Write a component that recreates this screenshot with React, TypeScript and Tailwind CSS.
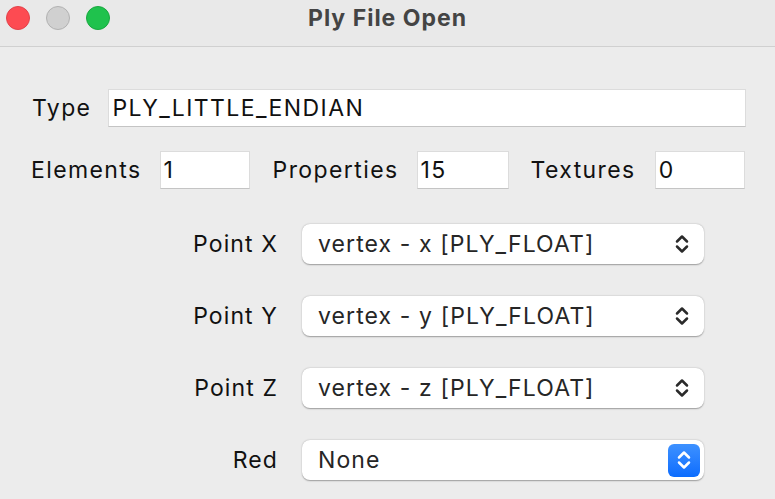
import React from "react";

const font = { fontFamily: "Inter, 'Liberation Sans', sans-serif" };

function Field({ value, className }: { value: string; className: string }) {
    return (
        <div className={"h-[38px] bg-white border border-[#dcdcdc] border-b-[#c4c4c4] flex items-center px-[3px] text-[23px] tracking-[1.4px] text-[#111]" + " " + className}>
            {value}
        </div>
    );
}

function Chevrons({ color }: { color: string }) {
    return (
        <svg width="14" height="20" viewBox="0 0 14 20" fill="none" stroke={color} strokeWidth="2.5" strokeLinecap="round" strokeLinejoin="round">
            <path d="M2 7.5 L7 2.5 L12 7.5" />
            <path d="M2 12.5 L7 17.5 L12 12.5" />
        </svg>
    );
}

function Select({ value, active }: { value: string; active?: boolean }) {
    return (
        <div className="h-[40px] bg-white rounded-[8px] shadow-[0_0.5px_1.5px_rgba(0,0,0,0.35)] flex items-center justify-between pl-[16px] pr-[4px] text-[23px] tracking-[1.1px] text-[#262626]">
            <span>{value}</span>
            {active ? (
                <div className="w-[32px] h-[33px] rounded-[6px] bg-gradient-to-b from-[#3d91ff] to-[#0a6cfe] flex items-center justify-center">
                    <Chevrons color="#ffffff" />
                </div>
            ) : (
                <div className="w-[32px] flex items-center justify-center mr-[2px]">
                    <Chevrons color="#2a2a2a" />
                </div>
            )}
        </div>
    );
}

export default function App() {
    const rows = [
        { label: "Point X", value: "vertex - x [PLY_FLOAT]" },
        { label: "Point Y", value: "vertex - y [PLY_FLOAT]" },
        { label: "Point Z", value: "vertex - z [PLY_FLOAT]" },
        { label: "Red", value: "None", active: true },
    ];

    return (
        <div style={font} className="w-[775px] h-[499px] bg-[#ececec] overflow-hidden text-[#111]">
            <div className="h-[47px] border-b border-[#d0d0d0] bg-[#e9e9e9] grid grid-cols-[1fr_auto_1fr] items-center">
                <div className="flex items-center gap-[16px] pl-[6px] self-start mt-[6px]">
                    <span className="w-[24px] h-[24px] rounded-full bg-[#fd4b52] border border-[#e2424a]" />
                    <span className="w-[24px] h-[24px] rounded-full bg-[#d0d0d0] border border-[#b2b2b2]" />
                    <span className="w-[24px] h-[24px] rounded-full bg-[#1fc24d] border border-[#18a83f]" />
                </div>
                <div className="text-[23px] tracking-[1px] font-bold text-[#444] -mt-[10px]">Ply File Open</div>
                <div />
            </div>

            <div className="pt-[42px] text-[23px] tracking-[1.4px]">
                <div className="flex items-center pl-[32px] pr-[29px]">
                    <span>Type</span>
                    <Field value="PLY_LITTLE_ENDIAN" className="ml-[17px] flex-1" />
                </div>

                <div className="flex items-center pl-[31px] mt-[24px]">
                    <span>Elements</span>
                    <Field value="1" className="ml-[18px] w-[90px]" />
                    <span className="ml-[23px]">Properties</span>
                    <Field value="15" className="ml-[18px] w-[92px]" />
                    <span className="ml-[22px]">Textures</span>
                    <Field value="0" className="ml-[19px] w-[90px]" />
                </div>

                <div className="grid grid-cols-[278px_402px] gap-x-[24px] gap-y-[32px] mt-[35px]">
                    {rows.map((r) => (
                        <React.Fragment key={r.label}>
                            <div className="text-right self-center tracking-[1.1px]">{r.label}</div>
                            <Select value={r.value} active={r.active} />
                        </React.Fragment>
                    ))}
                </div>
            </div>
        </div>
    );
}
